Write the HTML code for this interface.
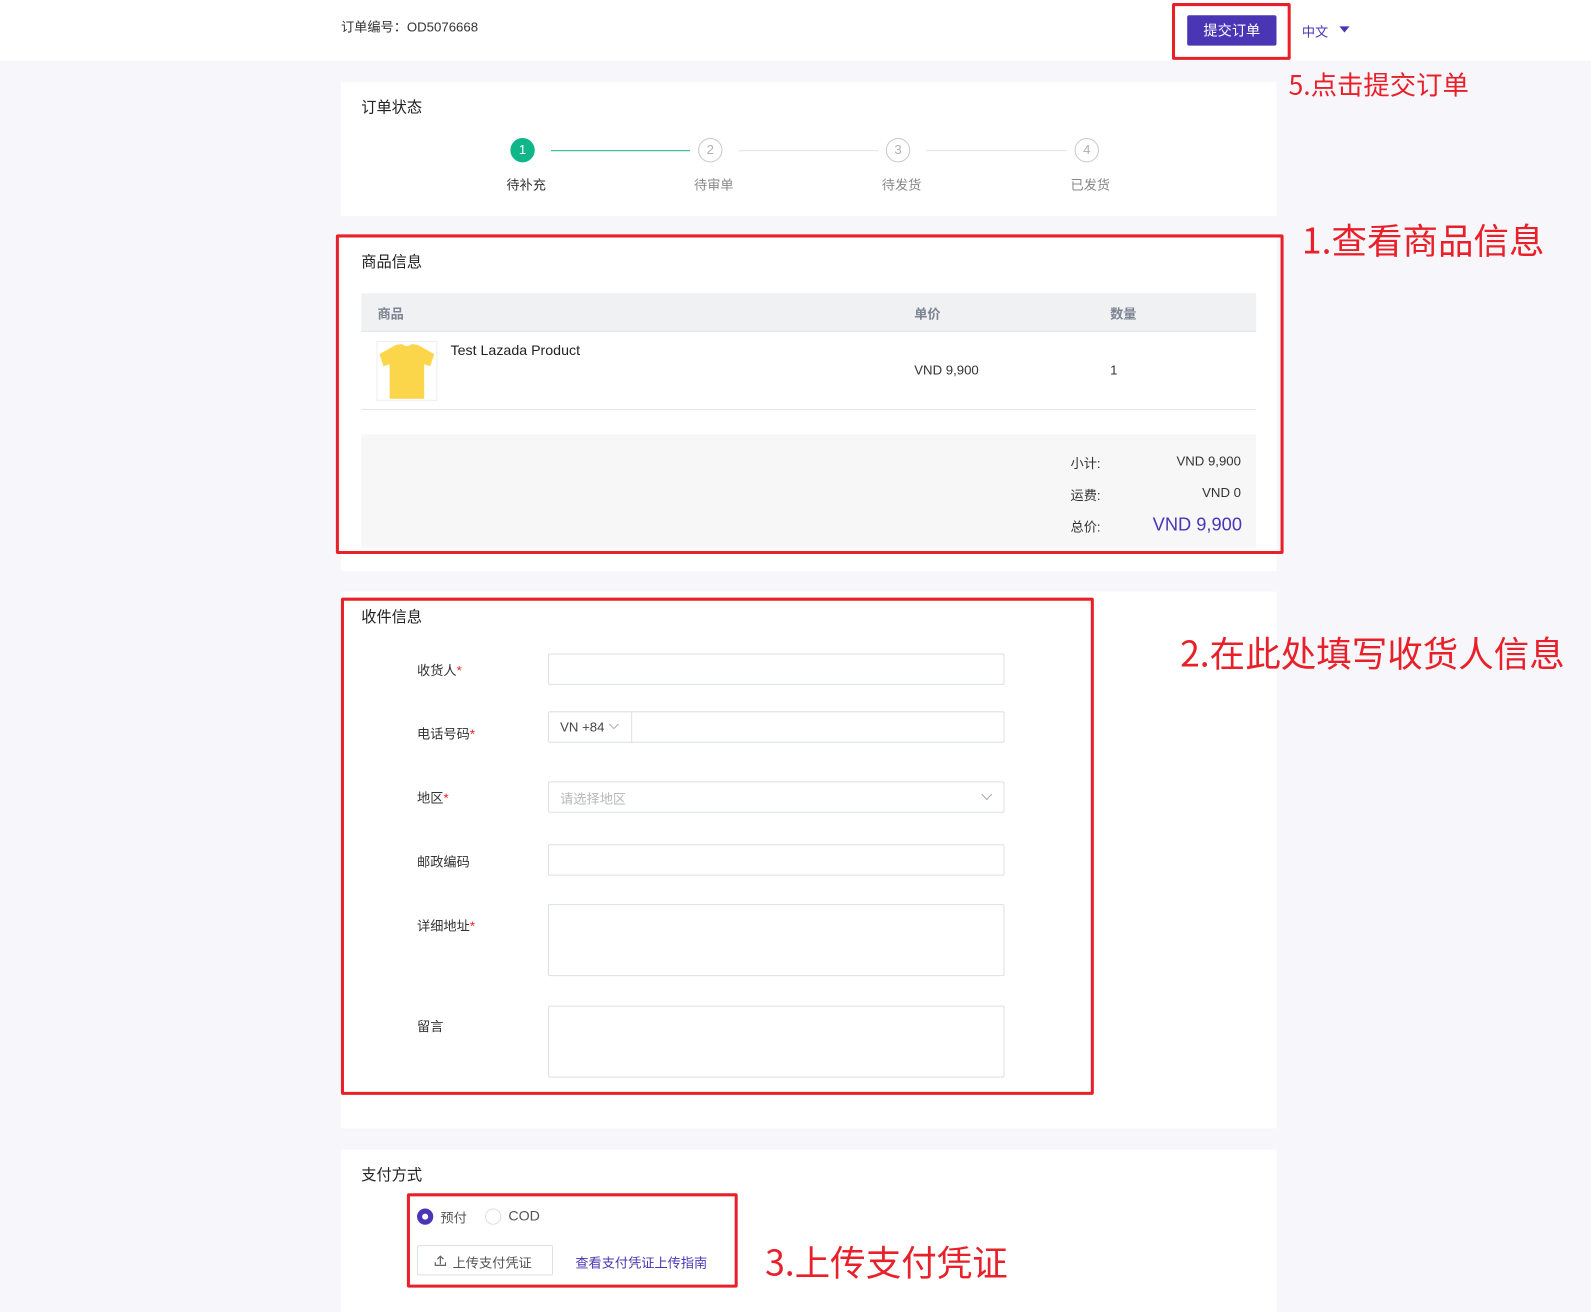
<!DOCTYPE html>
<html><head><meta charset="utf-8"><style>
*{margin:0;padding:0;box-sizing:border-box}
html,body{width:1591px;height:1305px;overflow:hidden;background:#f7f7fb}
#w{position:absolute;left:0;top:0;width:1568px;height:1286px;transform:scale(1.0147);transform-origin:0 0;font-family:"Liberation Sans","Noto Sans CJK SC",sans-serif;font-size:13px;color:#333}
.a{position:absolute}
.card{position:absolute;left:336px;width:922px;background:#fff}
.t{position:absolute;left:20px;font-size:15px;color:#222}
.red{position:absolute;border:3px solid #e8202a;border-radius:2px}
.ann{position:absolute;color:#e8202a;font-family:"Noto Sans CJK SC",sans-serif;white-space:nowrap}
.c{position:absolute;width:24px;height:24px;border-radius:50%;border:1px solid #c8c8c8;color:#b0b0b0;text-align:center;line-height:22px;font-size:13px;top:136px}
.ln{position:absolute;height:1px;top:148px}
.sl{position:absolute;top:172px;font-size:13px;color:#888}
.lab{position:absolute;left:411px;font-size:13px;color:#333}
.lab i{color:#e8202a;font-style:normal}
.in{position:absolute;left:540px;width:450px;border:1px solid #dcdfe6;border-radius:2px;background:#fff}
</style></head><body><div id="w">
<div class="a" style="left:0;top:0;width:1568px;height:60px;background:#fff"></div>
<div class="a" style="left:336px;top:16px">订单编号：OD5076668</div>
<div class="a" style="left:1170px;top:15px;width:88px;height:30px;background:#4a36b5;border-radius:2px;color:#fff;font-size:14px;text-align:center;line-height:30px">提交订单</div>
<div class="a" style="left:1283px;top:21px;color:#4a36b5">中文</div>
<div class="a" style="left:1320px;top:26px;border-left:5px solid transparent;border-right:5px solid transparent;border-top:6px solid #4a36b5"></div>
<div class="red" style="left:1155px;top:3px;width:117px;height:56px"></div>
<div class="ann" style="left:1270px;top:64px;font-size:26px">5.点击提交订单</div>

<div class="card" style="top:81px;height:132px"><div class="t" style="top:14px">订单状态</div></div>
<div class="c" style="left:503px;background:#10b68a;border-color:#10b68a;color:#fff">1</div>
<div class="ln" style="left:543px;width:137px;background:#10b68a"></div>
<div class="c" style="left:688px">2</div>
<div class="ln" style="left:728px;width:138px;background:#e3e3e8"></div>
<div class="c" style="left:873px">3</div>
<div class="ln" style="left:913px;width:138px;background:#e3e3e8"></div>
<div class="c" style="left:1059px">4</div>
<div class="sl" style="left:499px;color:#333">待补充</div>
<div class="sl" style="left:684px">待审单</div>
<div class="sl" style="left:869px">待发货</div>
<div class="sl" style="left:1055px">已发货</div>

<div class="card" style="top:232px;height:331px"><div class="t" style="top:15px">商品信息</div></div>
<div class="a" style="left:356px;top:289px;width:882px;height:38px;background:#f0f1f3;border-bottom:1px solid #e3e4e8"></div>
<div class="a" style="left:372px;top:299px;color:#7c8391;font-weight:bold">商品</div>
<div class="a" style="left:901px;top:299px;color:#7c8391;font-weight:bold">单价</div>
<div class="a" style="left:1094px;top:299px;color:#7c8391;font-weight:bold">数量</div>
<div class="a" style="left:356px;top:403px;width:882px;height:1px;background:#e3e4e8"></div>
<div class="a" style="left:371px;top:336px;width:60px;height:59px;border:1px solid #eee"></div>
<svg class="a" style="left:372px;top:337px" width="58" height="57"><path d="M18 3 L24 2 Q29 6 34 2 L40 3 L56 12 L52 24 L46 22 L46 56 L12 56 L12 22 L6 24 L2 12 Z" fill="#fcd64a"/></svg>
<div class="a" style="left:444px;top:337px;font-size:14px;color:#222">Test Lazada Product</div>
<div class="a" style="left:901px;top:357px">VND 9,900</div>
<div class="a" style="left:1094px;top:357px">1</div>
<div class="a" style="left:356px;top:428px;width:882px;height:112px;background:#f7f7f8"></div>
<div class="a" style="left:1055px;top:446px">小计:</div><div class="a" style="left:1100px;width:123px;text-align:right;top:447px">VND 9,900</div>
<div class="a" style="left:1055px;top:478px">运费:</div><div class="a" style="left:1100px;width:123px;text-align:right;top:478px">VND 0</div>
<div class="a" style="left:1055px;top:509px">总价:</div><div class="a" style="left:1080px;width:144px;text-align:right;top:507px;font-size:18px;color:#4a36b5">VND 9,900</div>
<div class="red" style="left:331px;top:231px;width:934px;height:315px"></div>
<div class="ann" style="left:1283px;top:210px;font-size:35px">1.查看商品信息</div>

<div class="card" style="top:583px;height:529px"><div class="t" style="top:14px">收件信息</div></div>
<div class="lab" style="top:650px">收货人<i>*</i></div><div class="in" style="top:644px;height:31px"></div>
<div class="lab" style="top:713px">电话号码<i>*</i></div><div class="in" style="top:701px;height:31px"></div>
<div class="a" style="left:622px;top:701px;width:1px;height:31px;background:#dcdfe6"></div>
<div class="a" style="left:552px;top:709px;color:#444">VN +84</div>
<svg class="a" style="left:600px;top:713px" width="10" height="6"><path d="M0.5 0.5 L5 5 L9.5 0.5" fill="none" stroke="#aaa"/></svg>
<div class="lab" style="top:776px">地区<i>*</i></div><div class="in" style="top:770px;height:31px"></div>
<div class="a" style="left:552px;top:777px;color:#b8b8b8">请选择地区</div>
<svg class="a" style="left:967px;top:782px" width="11" height="7"><path d="M0.5 0.5 L5.5 6 L10.5 0.5" fill="none" stroke="#aaa"/></svg>
<div class="lab" style="top:839px">邮政编码</div><div class="in" style="top:832px;height:31px"></div>
<div class="lab" style="top:902px">详细地址<i>*</i></div><div class="in" style="top:891px;height:71px"></div>
<div class="lab" style="top:1001px">留言</div><div class="in" style="top:991px;height:71px"></div>
<div class="red" style="left:336px;top:589px;width:742px;height:490px"></div>
<div class="ann" style="left:1163px;top:617px;font-size:35px">2.在此处填写收货人信息</div>

<div class="card" style="top:1133px;height:160px"><div class="t" style="top:14px">支付方式</div></div>
<div class="a" style="left:411px;top:1191px;width:16px;height:16px;border-radius:50%;border:5px solid #4a36b5;background:#fff"></div>
<div class="a" style="left:434px;top:1190px;color:#555">预付</div>
<div class="a" style="left:478px;top:1191px;width:16px;height:16px;border-radius:50%;border:1px solid #dcdfe6"></div>
<div class="a" style="left:501px;top:1190px;color:#555;font-size:14px">COD</div>
<div class="a" style="left:411px;top:1227px;width:134px;height:30px;border:1px solid #dcdfe6;border-radius:2px"></div>
<svg class="a" style="left:428px;top:1236px" width="12" height="12"><path d="M6 10 V2 M3 5 L6 2 L9 5 M1 8 V11 H11 V8" fill="none" stroke="#666" stroke-width="1.2"/></svg>
<div class="a" style="left:446px;top:1234px;color:#555">上传支付凭证</div>
<div class="a" style="left:567px;top:1234px;color:#4a36b5">查看支付凭证上传指南</div>
<div class="red" style="left:401px;top:1176px;width:326px;height:93px"></div>
<div class="ann" style="left:754px;top:1217px;font-size:35px">3.上传支付凭证</div>
</div></body></html>
